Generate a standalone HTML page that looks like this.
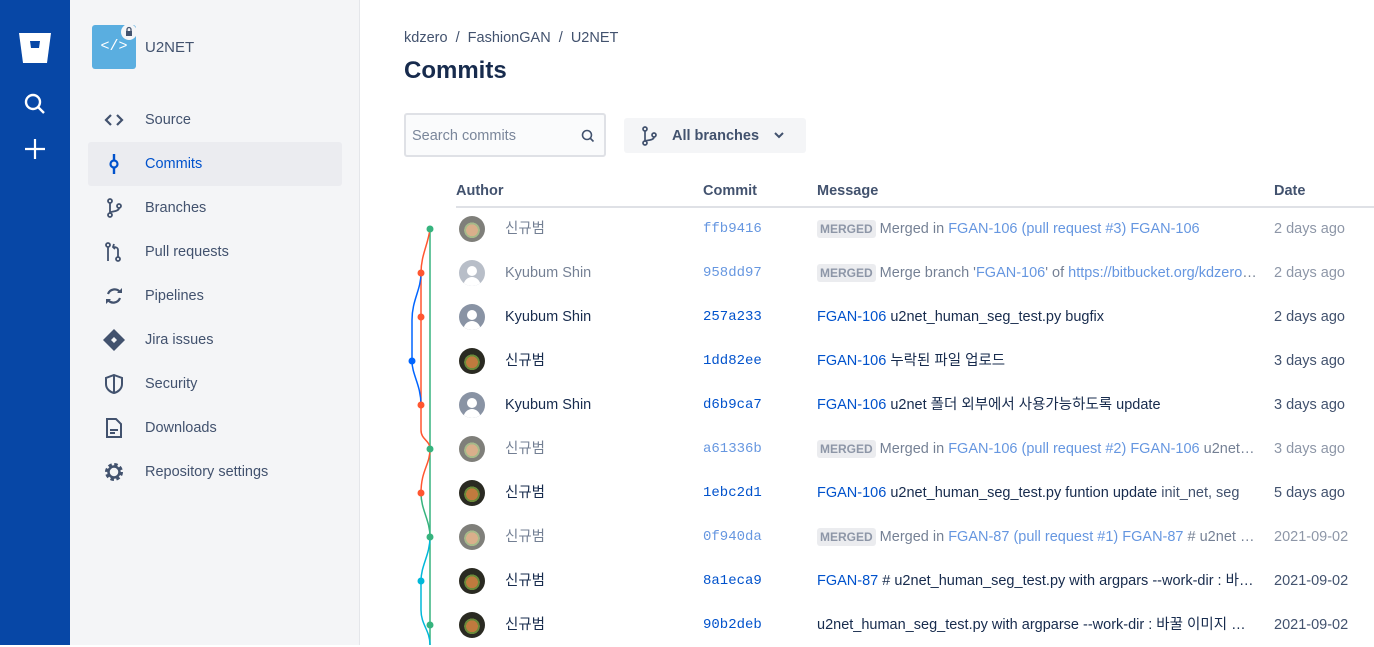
<!DOCTYPE html>
<html><head><meta charset="utf-8"><style>
*{margin:0;padding:0;box-sizing:border-box}
body{width:1374px;height:645px;overflow:hidden;font-family:"Liberation Sans","Noto Sans CJK KR",sans-serif;font-size:14px;color:#172b4d;background:#fff;position:relative}
.gnav{position:absolute;left:0;top:0;width:70px;height:645px;background:#0747a6}
.side{position:absolute;left:70px;top:0;width:290px;height:645px;background:#f4f5f7;border-right:1px solid #e4e6ea}
.repoic{position:absolute;left:92px;top:25px;width:44px;height:44px;background:#5aaee0;border-radius:3px;color:#fff;font-size:15px;text-align:center;line-height:44px;font-family:"Liberation Mono",monospace}
.lock{position:absolute;left:121px;top:24px;width:16px;height:16px;border-radius:50%;background:#f4f5f7}
.nav{position:absolute;left:88px;width:254px;height:44px;line-height:44px;padding-left:57px;color:#42526e;font-size:14.5px}
.nav svg{position:absolute;left:16px;top:12px}
.nav.act{background:#ebecf0;border-radius:3px;color:#0052cc}
.row{position:absolute;left:0;width:1374px;height:44px;line-height:44px}
.row>div{position:absolute;top:0;height:44px;line-height:44px}
.row>.av{top:9px;height:26px;left:459px;width:26px;border-radius:50%;overflow:hidden}
.fox{background:radial-gradient(circle at 50% 55%,#c07a3e 0 30%,#6b8a3a 31% 40%,#2a2a22 41%)}
.usr{background:#8993a4}
.nm{left:505px;font-size:14.5px}
.hash{left:703px;font-family:"Liberation Mono",monospace;font-size:14px;color:#0052cc}
.msg{left:817px;width:440px;white-space:nowrap;overflow:hidden;text-overflow:ellipsis;font-size:14.5px}
.dt{left:1274px;font-size:14.5px;color:#42526e}
.g{opacity:.6}
a{color:#0052cc;text-decoration:none}
.lz{background:#dfe1e6;color:#42526e;font-size:12px;font-weight:bold;padding:2px 3px;border-radius:3px;margin-right:4px}
</style></head><body>
<div class="gnav">
<svg style="position:absolute;left:18px;top:32px" width="34" height="32" viewBox="0 0 34 32"><path d="M1 1h32l-4 30H5z" fill="#fff"/><path d="M12 9h10l-1 7h-8z" fill="#0747a6"/></svg>
<svg style="position:absolute;left:24px;top:93px" width="22" height="22" viewBox="0 0 22 22"><circle cx="9" cy="9" r="7" fill="none" stroke="#fff" stroke-width="2.4"/><path d="M14 14l6 6" stroke="#fff" stroke-width="2.4"/></svg>
<svg style="position:absolute;left:24px;top:138px" width="22" height="22"><path d="M11 1v20M1 11h20" stroke="#fff" stroke-width="2.2"/></svg>
</div>
<div class="side"></div>
<div class="repoic">&lt;/&gt;</div>
<div class="lock"><svg width="16" height="16"><rect x="5" y="7" width="6" height="5" fill="#42526e"/><path d="M6 7V5.5a2 2 0 0 1 4 0V7" fill="none" stroke="#42526e" stroke-width="1.3"/></svg></div>
<div style="position:absolute;left:145px;top:39px;font-size:15px;color:#42526e;font-weight:500">U2NET</div>

<div class="nav" style="top:98px"><svg width="20" height="20"><path d="M7 5l-5 5 5 5M13 5l5 5-5 5" fill="none" stroke="#42526e" stroke-width="2.2"/></svg>Source</div>
<div class="nav act" style="top:142px"><svg width="20" height="20"><path d="M10 0v6M10 14v6" stroke="#0052cc" stroke-width="2.4"/><circle cx="10" cy="10" r="3.5" fill="none" stroke="#0052cc" stroke-width="2.2"/></svg>Commits</div>
<div class="nav" style="top:186px"><svg width="20" height="20"><circle cx="6" cy="3" r="2" fill="none" stroke="#42526e" stroke-width="1.8"/><circle cx="6" cy="17" r="2" fill="none" stroke="#42526e" stroke-width="1.8"/><circle cx="15" cy="8" r="2" fill="none" stroke="#42526e" stroke-width="1.8"/><path d="M6 5v10M15 10c0 4-9 3-9 5" fill="none" stroke="#42526e" stroke-width="1.8"/></svg>Branches</div>
<div class="nav" style="top:230px"><svg width="20" height="20"><circle cx="4" cy="3" r="2" fill="none" stroke="#42526e" stroke-width="1.8"/><circle cx="14" cy="17" r="2" fill="none" stroke="#42526e" stroke-width="1.8"/><path d="M4 5v14M14 15V8c0-2-2-3-4-3M10 2l-1 3 2 2" fill="none" stroke="#42526e" stroke-width="1.8"/></svg>Pull requests</div>
<div class="nav" style="top:274px"><svg width="20" height="20"><path d="M16 6a7 7 0 0 0-12 2M4 14a7 7 0 0 0 12-2" fill="none" stroke="#42526e" stroke-width="2.2"/><path d="M13 7h5V2M7 13H2v5" fill="#42526e"/></svg>Pipelines</div>
<div class="nav" style="top:318px"><svg width="22" height="22" style="left:15px;top:11px"><path d="M11 0l11 11-11 11L0 11z" fill="#42526e"/><path d="M11 8l3 3-3 3-3-3z" fill="#f4f5f7"/></svg>Jira issues</div>
<div class="nav" style="top:362px"><svg width="20" height="20"><path d="M10 1l8 3v6c0 5-4 8-8 9-4-1-8-4-8-9V4z" fill="none" stroke="#42526e" stroke-width="2"/><path d="M10 2v16" stroke="#42526e" stroke-width="2"/></svg>Security</div>
<div class="nav" style="top:406px"><svg width="20" height="20"><path d="M3 1h9l5 5v13H3z" fill="none" stroke="#42526e" stroke-width="2"/><path d="M6 12h8M6 15h5" stroke="#42526e" stroke-width="2"/></svg>Downloads</div>
<div class="nav" style="top:450px"><svg width="22" height="22" style="left:15px;top:11px"><circle cx="11" cy="11" r="7" fill="none" stroke="#42526e" stroke-width="4" stroke-dasharray="3.2 2.3"/><circle cx="11" cy="11" r="5.5" fill="none" stroke="#42526e" stroke-width="2.5"/></svg>Repository settings</div>

<div style="position:absolute;left:404px;top:30px;font-size:14.5px;color:#42526e">kdzero &nbsp;/&nbsp; FashionGAN &nbsp;/&nbsp; U2NET</div>
<div style="position:absolute;left:404px;top:57px;font-size:24px;font-weight:bold;color:#172b4d">Commits</div>
<div style="position:absolute;left:404px;top:113px;width:202px;height:44px;border:2px solid #dfe1e6;border-radius:3px;background:#fafbfc;padding:13px 6px;color:#7a869a;font-size:14.5px">Search commits
<svg style="position:absolute;right:9px;top:14px" width="14" height="14"><circle cx="6" cy="6" r="4.5" fill="none" stroke="#42526e" stroke-width="1.6"/><path d="M9.5 9.5l3 3" stroke="#42526e" stroke-width="1.6"/></svg></div>
<div style="position:absolute;left:624px;top:118px;width:182px;height:35px;background:#f4f5f7;border-radius:3px;padding:10px 0 0 48px;font-weight:bold;color:#42526e;font-size:14.5px">All branches
<svg style="position:absolute;left:17px;top:8px" width="18" height="20"><circle cx="4" cy="3" r="2" fill="none" stroke="#42526e" stroke-width="1.7"/><circle cx="4" cy="17" r="2" fill="none" stroke="#42526e" stroke-width="1.7"/><circle cx="13" cy="9" r="2" fill="none" stroke="#42526e" stroke-width="1.7"/><path d="M4 5v10M13 11c0 4-9 3-9 4" fill="none" stroke="#42526e" stroke-width="1.7"/></svg>
<svg style="position:absolute;left:150px;top:14px" width="10" height="8"><path d="M1 1l4 4 4-4" fill="none" stroke="#42526e" stroke-width="2"/></svg></div>

<div style="position:absolute;top:183px;left:456px;font-weight:bold;color:#42526e;font-size:14.5px">Author</div>
<div style="position:absolute;top:183px;left:703px;font-weight:bold;color:#42526e;font-size:14.5px">Commit</div>
<div style="position:absolute;top:183px;left:817px;font-weight:bold;color:#42526e;font-size:14.5px">Message</div>
<div style="position:absolute;top:183px;left:1274px;font-weight:bold;color:#42526e;font-size:14.5px">Date</div>
<div style="position:absolute;top:206px;left:456px;width:918px;height:2px;background:#dfe1e6"></div>

<svg style="position:absolute;left:400px;top:208px" width="50" height="437" viewBox="400 208 50 437" fill="none" stroke-width="1.5">
<path d="M430 229V645" stroke="#36b37e"/>
<path d="M430 229C428 245 421 255 421 273V430C421 440 430 440 430 449M430 449C430 465 421 470 421 493" stroke="#ff5630"/>
<path d="M421 273C421 290 412 300 412 320V361C412 375 421 385 421 405" stroke="#0065ff"/>
<path d="M421 493C421 510 430 520 430 537" stroke="#36b37e"/>
<path d="M430 537C430 555 421 565 421 581V610C421 625 430 630 430 645" stroke="#00b8d9"/>
<g stroke="none">
<circle cx="430" cy="229" r="3.5" fill="#36b37e"/><circle cx="421" cy="273" r="3.5" fill="#ff5630"/><circle cx="421" cy="317" r="3.5" fill="#ff5630"/><circle cx="412" cy="361" r="3.5" fill="#0065ff"/><circle cx="421" cy="405" r="3.5" fill="#ff5630"/><circle cx="430" cy="449" r="3.5" fill="#36b37e"/><circle cx="421" cy="493" r="3.5" fill="#ff5630"/><circle cx="430" cy="537" r="3.5" fill="#36b37e"/><circle cx="421" cy="581" r="3.5" fill="#00b8d9"/><circle cx="430" cy="625" r="3.5" fill="#36b37e"/></g></svg>

<svg width="0" height="0" style="position:absolute"><defs><g id="p"><circle cx="13" cy="10" r="5" fill="#fff"/><path d="M4 25c1-6 5-9 9-9s8 3 9 9z" fill="#fff"/></g></defs></svg>

<div class="row" style="top:207px"><div class="av fox g"></div><div class="nm g">신규범</div><div class="hash g">ffb9416</div><div class="msg g"><span class="lz">MERGED</span>Merged in <a>FGAN-106 (pull request #3) FGAN-106</a></div><div class="dt g">2 days ago</div></div>
<div class="row" style="top:251px"><div class="av usr g"><svg width="26" height="26"><use href="#p"/></svg></div><div class="nm g">Kyubum Shin</div><div class="hash g">958dd97</div><div class="msg g"><span class="lz">MERGED</span>Merge branch '<a>FGAN-106</a>' of <a>https://bitbucket.org/kdzero/fashiongan</a></div><div class="dt g">2 days ago</div></div>
<div class="row" style="top:295px"><div class="av usr"><svg width="26" height="26"><use href="#p"/></svg></div><div class="nm">Kyubum Shin</div><div class="hash">257a233</div><div class="msg"><a>FGAN-106</a> u2net_human_seg_test.py bugfix</div><div class="dt">2 days ago</div></div>
<div class="row" style="top:339px"><div class="av fox"></div><div class="nm">신규범</div><div class="hash">1dd82ee</div><div class="msg"><a>FGAN-106</a> 누락된 파일 업로드</div><div class="dt">3 days ago</div></div>
<div class="row" style="top:383px"><div class="av usr"><svg width="26" height="26"><use href="#p"/></svg></div><div class="nm">Kyubum Shin</div><div class="hash">d6b9ca7</div><div class="msg"><a>FGAN-106</a> u2net 폴더 외부에서 사용가능하도록 update</div><div class="dt">3 days ago</div></div>
<div class="row" style="top:427px"><div class="av fox g"></div><div class="nm g">신규범</div><div class="hash g">a61336b</div><div class="msg g"><span class="lz">MERGED</span>Merged in <a>FGAN-106 (pull request #2) FGAN-106</a> u2net update</div><div class="dt g">3 days ago</div></div>
<div class="row" style="top:471px"><div class="av fox"></div><div class="nm">신규범</div><div class="hash">1ebc2d1</div><div class="msg"><a>FGAN-106</a> u2net_human_seg_test.py funtion update <span style="color:#42526e">init_net, seg</span></div><div class="dt">5 days ago</div></div>
<div class="row" style="top:515px"><div class="av fox g"></div><div class="nm g">신규범</div><div class="hash g">0f940da</div><div class="msg g"><span class="lz">MERGED</span>Merged in <a>FGAN-87 (pull request #1) FGAN-87</a> # u2net update</div><div class="dt g">2021-09-02</div></div>
<div class="row" style="top:559px"><div class="av fox"></div><div class="nm">신규범</div><div class="hash">8a1eca9</div><div class="msg"><a>FGAN-87</a> # u2net_human_seg_test.py with argpars --work-dir : 바꿀 이미지</div><div class="dt">2021-09-02</div></div>
<div class="row" style="top:603px"><div class="av fox"></div><div class="nm">신규범</div><div class="hash">90b2deb</div><div class="msg">u2net_human_seg_test.py with argparse --work-dir : 바꿀 이미지 경로</div><div class="dt">2021-09-02</div></div>
</body></html>
